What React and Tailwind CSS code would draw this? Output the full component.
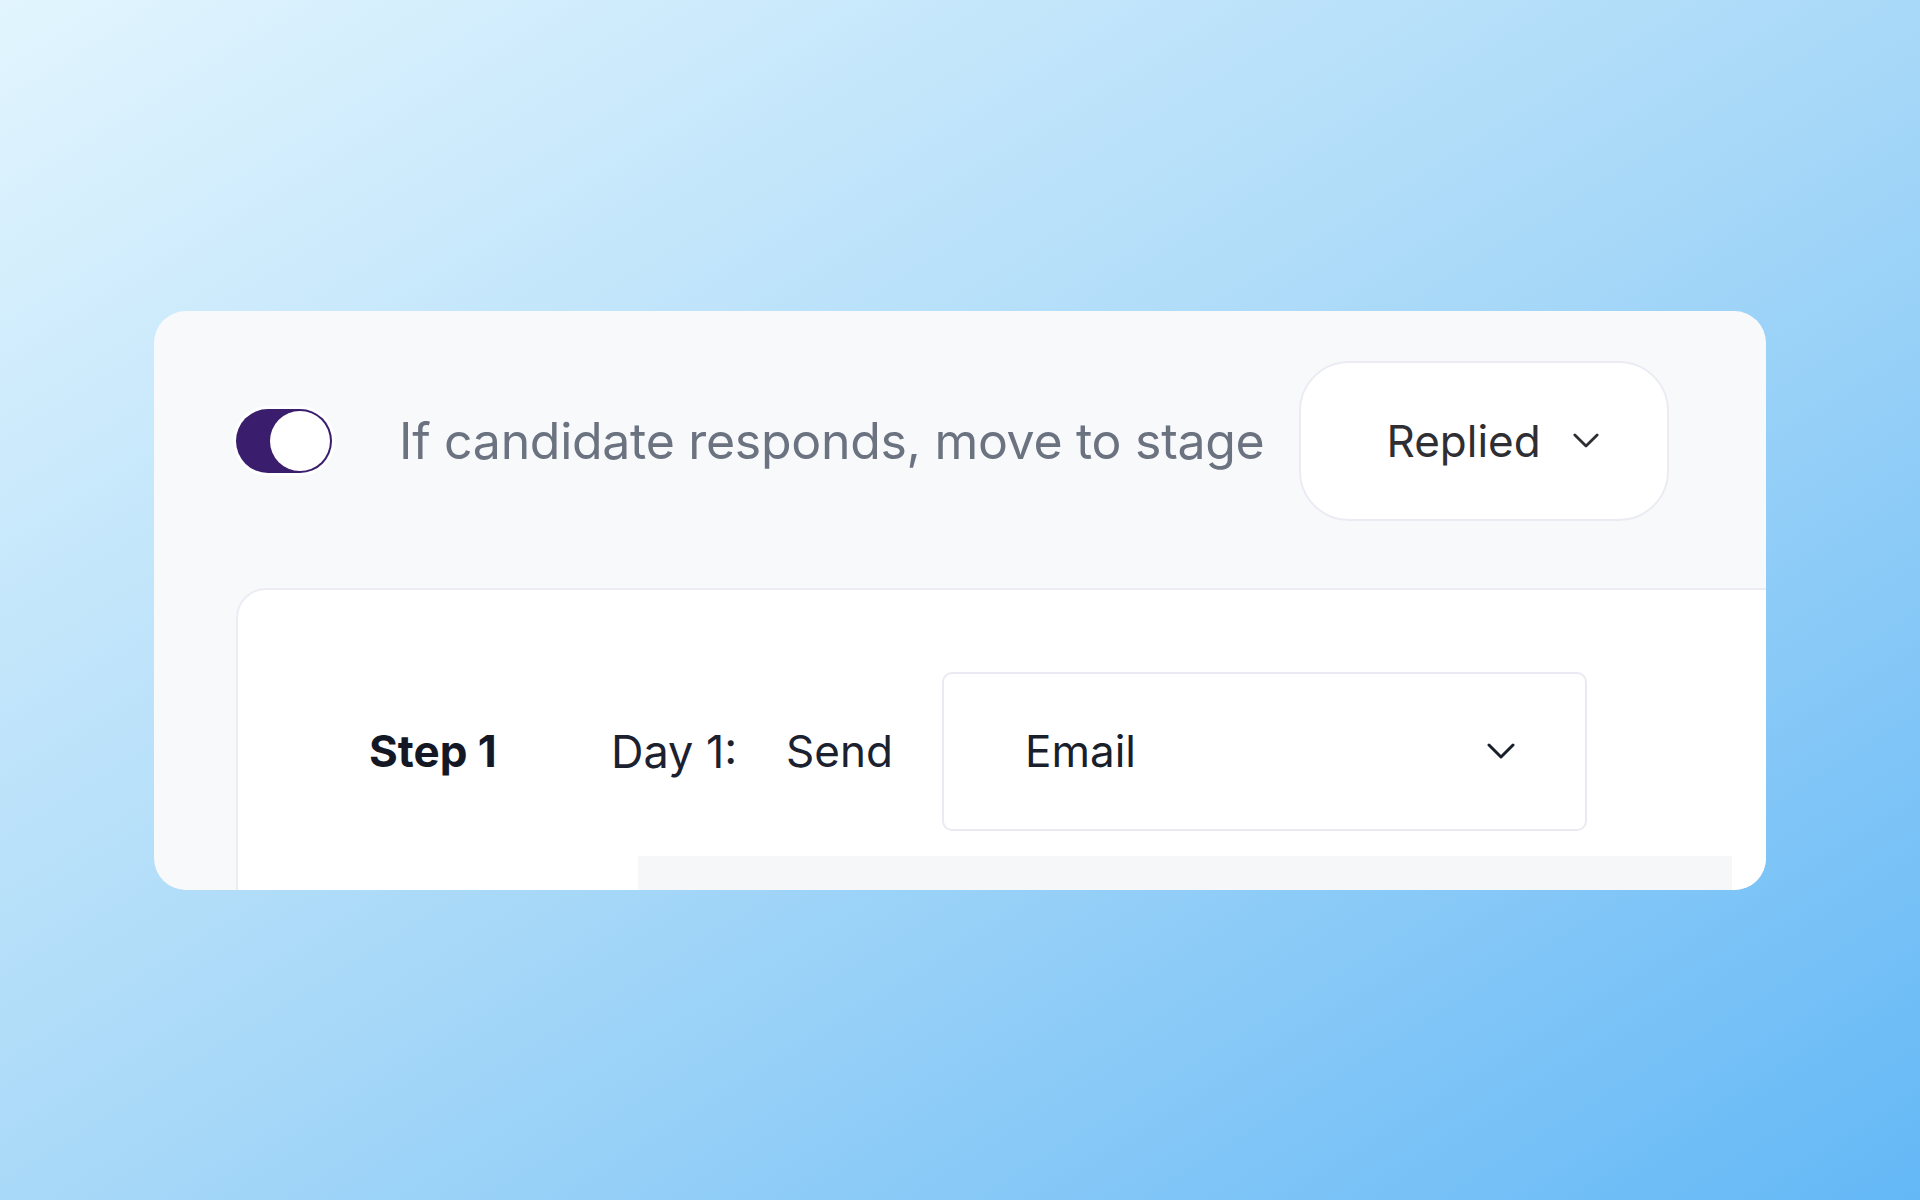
import React from "react";

function Chevron({ className }) {
  return (
    <svg className={className} viewBox="0 0 28 16" fill="none">
      <polyline
        points="2,2 14,14 26,2"
        stroke="currentColor"
        strokeWidth="3"
        strokeLinecap="round"
        strokeLinejoin="round"
      />
    </svg>
  );
}

function Toggle() {
  return (
    <div className="flex h-[64px] w-[96px] shrink-0 items-center justify-end rounded-full bg-[#3a1d6c] p-[2px] shadow-[0_0_0_3px_#ffffff]">
      <div className="h-[60px] w-[60px] rounded-full bg-white" />
    </div>
  );
}

export default function App() {
  return (
    <div
      className="flex min-h-screen w-full items-center justify-center bg-gradient-to-br from-[#e2f5fe] via-[#a9d9f8] to-[#63b8f6]"
      style={{ fontFamily: "Inter, 'Noto Sans', 'Liberation Sans', sans-serif" }}
    >
      <div className="flex h-[579px] w-[1612px] flex-col overflow-hidden rounded-[32px] bg-[#f8f9fb] pl-[82px] pt-[50px]">
        {/* automation rule row */}
        <div className="flex h-[160px] items-center">
          <Toggle />
          <span className="ml-[67px] whitespace-nowrap text-[50px] leading-none tracking-[-0.3px] text-[#6b7280]">
            If candidate responds, move to stage
          </span>
          <button className="ml-[35px] flex h-[160px] w-[370px] shrink-0 items-center gap-[32px] rounded-[50px] border-2 border-[#ecebf3] bg-white pl-[85px] text-[44px] leading-none text-[#2e2e33]">
            <span>Replied</span>
            <Chevron className="h-[15px] w-[26px] text-[#2e2e33]" />
          </button>
        </div>

        {/* sequence step card */}
        <div className="mt-[67px] w-[1600px] shrink-0 rounded-tl-[30px] border-2 border-[#edecf4] bg-white pt-[82px]">
          <div className="flex items-center pl-[131px]">
            <span className="w-[132px] whitespace-nowrap text-[44px] font-bold leading-none text-[#141824]">
              Step 1
            </span>
            <span className="ml-[110px] w-[125px] whitespace-nowrap text-[45px] leading-none text-[#1c2130]">
              Day 1:
            </span>
            <span className="ml-[50px] w-[104px] whitespace-nowrap text-[44px] leading-none text-[#1c2130]">
              Send
            </span>
            <div className="ml-[52px] flex h-[159px] w-[645px] items-center justify-between rounded-[10px] border-2 border-[#ebeaf3] bg-white pl-[81px] pr-[70px]">
              <span className="text-[44px] leading-none text-[#1a1f2c]">Email</span>
              <Chevron className="h-[16px] w-[28px] text-[#1a1f2c]" />
            </div>
          </div>
          <div className="ml-[400px] mt-[25px] h-[60px] w-[1094px] bg-[#f6f7f9]" />
        </div>
      </div>
    </div>
  );
}
